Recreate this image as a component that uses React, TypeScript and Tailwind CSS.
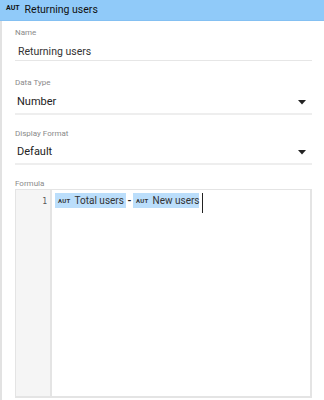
import React from "react";

function Caret() {
  return (
    <svg width="8" height="5" viewBox="0 0 8 5" className="mr-[6px]">
      <path d="M0 0 L8 0 L4 4.5 Z" fill="#222" />
    </svg>
  );
}

function Chip({ label, w }: { label: string; w: string }) {
  return (
    <span className={`inline-flex items-center h-[15px] bg-[#bbdefb] pl-[3px] text-[10px] text-[#333] leading-none whitespace-nowrap shrink-0 ${w}`}>
      <span className="text-[6px] font-bold mr-[4px] tracking-[0.3px]">AUT</span>
      <span>{label}</span>
    </span>
  );
}

export default function App() {
  return (
    <div className="w-[324px] h-[400px] bg-white flex flex-col overflow-hidden" style={{ fontFamily: "Roboto, 'Liberation Sans', sans-serif" }}>
      <div className="h-[21px] bg-[#90caf9] border-b border-[#84c0f2] flex items-center pl-[6px] shrink-0">
        <span className="text-[7px] font-bold text-[#111] mr-[5px] -mt-[4px]">AUT</span>
        <span className="text-[10.5px] text-[#111]">Returning users</span>
      </div>
      <div className="flex-1 flex">
        <div className="w-[2px] bg-[#e2e2e2] shrink-0" />
        <div className="flex-1 flex flex-col pl-[13px] pr-[12px]">
          <div className="mt-[7px] h-[10px] leading-[10px] text-[8px] text-[#8a8a8a]">Name</div>
          <div className="mt-[1px] h-[22px] pt-[4px] flex items-center border-b border-[#e6e6e6] text-[10.5px] text-[#333] pl-[3px]">Returning users</div>

          <div className="mt-[17px] h-[10px] leading-[10px] text-[8px] text-[#8a8a8a]">Data Type</div>
          <div className="mt-[1px] h-[26px] pt-[3px] flex items-center justify-between border-b-2 border-[#eeeeee] text-[11px] text-[#222] pl-[2px]">
            <span>Number</span>
            <Caret />
          </div>

          <div className="mt-[14px] h-[10px] leading-[10px] text-[8px] text-[#8a8a8a]">Display Format</div>
          <div className="h-[26px] pt-[3px] flex items-center justify-between border-b-2 border-[#eeeeee] text-[11px] text-[#222] pl-[2px]">
            <span>Default</span>
            <Caret />
          </div>

          <div className="mt-[14px] h-[10px] leading-[10px] text-[8px] text-[#8a8a8a]">Formula</div>
          <div className="h-[209px] border border-[#e4e4e4] border-b-2 border-r-2 flex">
            <div className="w-[36px] bg-[#f5f5f5] border-r-2 border-[#e4e4e4] text-right pr-[3px] pt-[7px] text-[8px] leading-[10px] text-[#555]" style={{ fontFamily: "'DejaVu Sans Mono', monospace" }}>1</div>
            <div className="flex-1 flex items-start pt-[3px] pl-[3px]">
              <Chip label="Total users" w="w-[71px]" />
              <span className="text-[10px] text-[#222] w-[7px] text-center mt-[3px] leading-[10px] font-bold shrink-0">-</span>
              <Chip label="New users" w="w-[66px]" />
              <span className="w-[1px] h-[20px] bg-[#222] ml-[3px] shrink-0" />
            </div>
          </div>
        </div>
      </div>
    </div>
  );
}
